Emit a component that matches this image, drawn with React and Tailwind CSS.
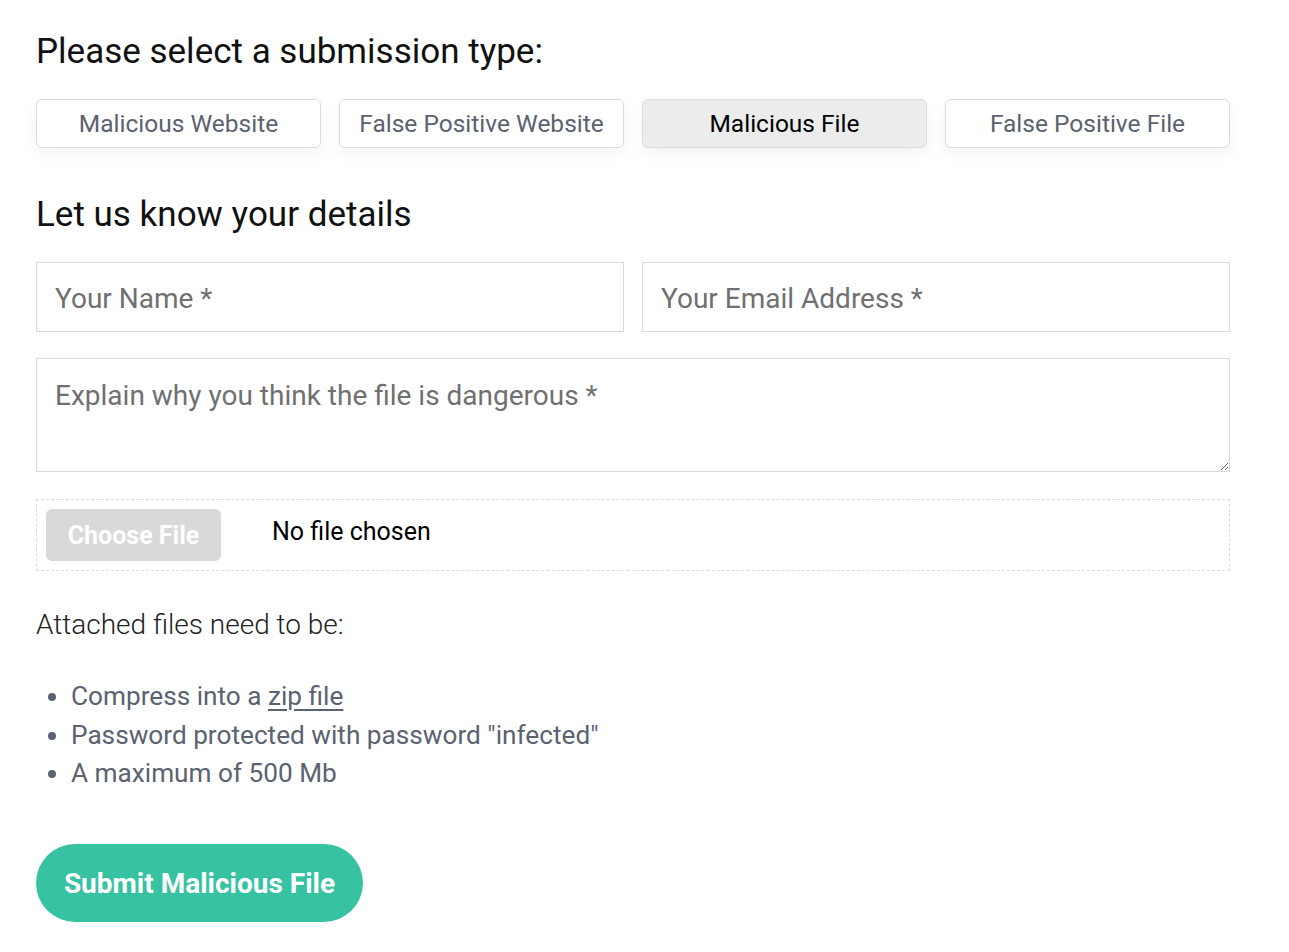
import React, { useState } from 'react';

const TYPES = ['Malicious Website', 'False Positive Website', 'Malicious File', 'False Positive File'];

export default function App() {
  const [selected, setSelected] = useState(2);

  return (
    <div className="min-h-screen bg-white font-['Roboto',sans-serif] text-[#222]">
      <div className="w-[1194px] ml-[36px] pt-[30px] pb-[30px]">
        <h2 className="text-[35px] leading-[44px] text-[#111]">Please select a submission type:</h2>

        <div className="mt-[25px] grid grid-cols-4 gap-[18px]">
          {TYPES.map((t, i) => (
            <button
              key={t}
              onClick={() => setSelected(i)}
              className={
                i === selected
                  ? 'h-[49px] rounded-[6px] border border-[#dcdcdc] bg-[#ececec] pt-[2px] text-[24.5px] text-black shadow-[0_6px_16px_rgba(0,0,0,0.05)]'
                  : 'h-[49px] rounded-[6px] border border-[#dcdcdc] bg-white pt-[2px] text-[24.5px] text-[#5b6270] shadow-[0_6px_16px_rgba(0,0,0,0.05)]'
              }
            >
              {t}
            </button>
          ))}
        </div>

        <h2 className="mt-[45px] text-[35px] leading-[44px] text-[#111]">Let us know your details</h2>

        <div className="mt-[25px] grid grid-cols-2 gap-[18px]">
          <input
            placeholder="Your Name *"
            className="h-[70px] border border-[#d9d9d9] px-[18px] pt-[2px] text-[28px] outline-none placeholder:text-[#707070]"
          />
          <input
            placeholder="Your Email Address *"
            className="h-[70px] border border-[#d9d9d9] px-[18px] pt-[2px] text-[28px] outline-none placeholder:text-[#707070]"
          />
        </div>

        <textarea
          placeholder="Explain why you think the file is dangerous *"
          className="mt-[26px] block h-[114px] w-full border border-[#d9d9d9] px-[18px] pt-[20px] text-[28px] leading-[34px] outline-none placeholder:text-[#707070]"
        />

        <div className="mt-[27px] flex h-[72px] items-center border border-dashed border-[#dcdcdc] px-[9px]">
          <span className="flex h-[52px] w-[175px] items-center justify-center rounded-[6px] bg-[#d9d9d9] pt-[2px] text-[25px] font-bold text-white">
            Choose File
          </span>
          <span className="ml-[51px] -mt-[6px] text-[25px] text-black">No file chosen</span>
        </div>

        <p className="mt-[37px] text-[28px] font-light leading-[34px] text-[#222]">Attached files need to be:</p>

        <ul className="mt-[35px] list-disc pl-[35px] text-[26.2px] leading-[38.5px] text-[#5b6270] marker:text-[#5b6270]">
          <li>
            Compress into a <a href="#" className="underline underline-offset-[4px]">zip file</a>
          </li>
          <li>Password protected with password "infected"</li>
          <li>A maximum of 500 Mb</li>
        </ul>

        <button className="mt-[51px] flex h-[78px] w-[327px] items-center justify-center rounded-full bg-[#37c2a2] pt-[3px] text-[28px] font-bold text-white">
          Submit Malicious File
        </button>
      </div>
    </div>
  );
}
